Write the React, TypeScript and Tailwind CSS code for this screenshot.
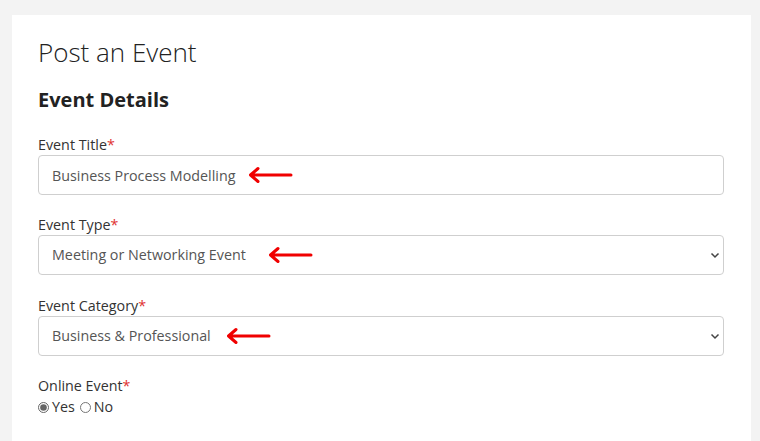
import React from "react";

const Arrow = ({ left }: { left: number }) => (
    <svg
        className="absolute top-1/2 -translate-y-1/2 pointer-events-none"
        style={{ left }}
        width="46"
        height="17"
        viewBox="0 0 46 17"
    >
        <path d="M44 8.5H3.5M11 2L3.5 8.5 11 15" fill="none" stroke="#f00000" strokeWidth="3" strokeLinecap="round" strokeLinejoin="round" />
    </svg>
);

const Label = ({ text }: { text: string }) => (
    <label className="block text-[14.3px] text-[#333] leading-5">
        {text}
        <span className="text-[#e0312f]">*</span>
    </label>
);

const Chevron = () => (
    <svg className="absolute right-[4px] top-1/2 -translate-y-1/2 pointer-events-none" width="10" height="8" viewBox="0 0 10 8">
        <path d="M1.5 2.5L5 6l3.5-3.5" fill="none" stroke="#444" strokeWidth="1.5" />
    </svg>
);

const fieldClass =
    "block w-full h-[40px] min-h-[40px] box-border rounded-[4px] border border-[#cfcfcf] bg-white pl-[13px] text-[14.3px] text-[#555] outline-none appearance-none";

export default function App() {
    return (
        <div className="min-h-[441px] bg-[#f3f3f3] pl-[12px] pr-[9px] pt-[15px] font-['Open_Sans',sans-serif]">
            <div className="bg-white min-h-[426px] pl-[26px] pr-[27px] pt-[21px]">
                <h1 className="text-[26px] font-light text-[#222] leading-8">Post an Event</h1>
                <h2 className="mt-[18px] text-[20px] font-bold text-[#222] leading-7">Event Details</h2>

                <div className="mt-[21px]">
                    <Label text="Event Title" />
                    <div className="relative">
                        <input className={fieldClass} defaultValue="Business Process Modelling" />
                        <Arrow left={209} />
                    </div>
                </div>

                <div className="mt-[20px]">
                    <Label text="Event Type" />
                    <div className="relative">
                        <select className={fieldClass} defaultValue="meeting">
                            <option value="meeting">Meeting or Networking Event</option>
                        </select>
                        <Chevron />
                        <Arrow left={229} />
                    </div>
                </div>

                <div className="mt-[21px]">
                    <Label text="Event Category" />
                    <div className="relative">
                        <select className={fieldClass} defaultValue="business">
                            <option value="business">Business &amp; Professional</option>
                        </select>
                        <Chevron />
                        <Arrow left={187} />
                    </div>
                </div>

                <div className="mt-[20px]">
                    <div className="text-[14.3px] text-[#333] leading-5">
                        Online Event<span className="text-[#e0312f]">*</span>
                    </div>
                    <div className="flex items-center gap-[3px] text-[14.3px] text-[#333] leading-[22px]">
                        <input type="radio" name="online" defaultChecked className="m-0 w-[11px] h-[11px] accent-[#666]" />
                        <span>Yes</span>
                        <input type="radio" name="online" className="m-0 ml-[2px] w-[11px] h-[11px]" />
                        <span>No</span>
                    </div>
                </div>
            </div>
        </div>
    );
}
